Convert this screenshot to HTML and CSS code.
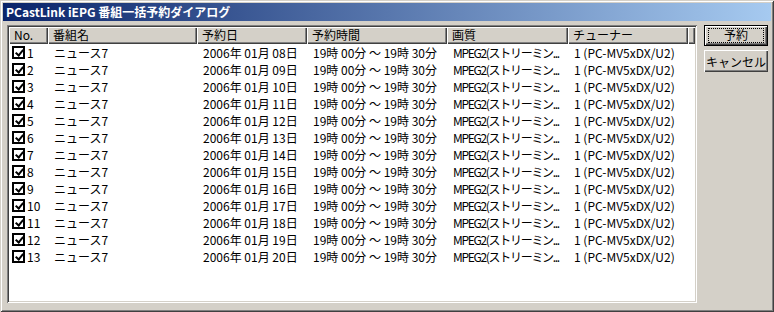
FILE: index.html
```html
<!DOCTYPE html>
<html lang="ja">
<head>
    <meta charset="UTF-8">
    <title>PCastLink iEPG 番組一括予約ダイアログ</title>
    <link rel="stylesheet" href="styles.css">
</head>
<body>
<div class="window">
    <div class="titlebar">PCastLink iEPG 番組一括予約ダイアログ</div>
    <div class="content">
        <div class="listview">
            <div class="header">
                <div class="hcell c-no">No.</div>
                <div class="hcell c-name">番組名</div>
                <div class="hcell c-date">予約日</div>
                <div class="hcell c-time">予約時間</div>
                <div class="hcell c-quality">画質</div>
                <div class="hcell c-tuner">チューナー</div>
                <div class="hcell c-rest"></div>
            </div>
            <div id="rows"></div>
        </div>
        <div class="buttons">
            <button class="btn default"><span class="focus">予約</span></button>
            <button class="btn">キャンセル</button>
        </div>
    </div>
</div>
<script>
    const rows = document.getElementById("rows");
    for (let i = 1; i <= 13; i++) {
        const day = String(7 + i).padStart(2, "0");
        const row = document.createElement("div");
        row.className = "row";
        row.innerHTML =
            '<div class="cell c-no"><span class="check"></span>' + i + '</div>' +
            '<div class="cell c-name">ニュース7</div>' +
            '<div class="cell c-date">2006年 01月 ' + day + '日</div>' +
            '<div class="cell c-time">19時 00分 ～ 19時 30分</div>' +
            '<div class="cell c-quality"><span class="squeeze">MPEG2(ストリーミン...</span></div>' +
            '<div class="cell c-tuner">1 (PC-MV5xDX/U2)</div>';
        rows.appendChild(row);
    }
</script>
</body>
</html>
```

FILE: styles.css
```css
body {
    margin: 0;
    font-family: "Noto Sans CJK JP", "DejaVu Sans", sans-serif;
    font-size: 12px;
    color: #000;
    background-color: #d4d0c8;
}
.window {
    width: 774px;
    height: 312px;
    box-sizing: border-box;
    padding: 3px;
    background-color: #d4d0c8;
    box-shadow: inset 1px 1px #d4d0c8, inset -1px -1px #404040,
                inset 2px 2px #ffffff, inset -2px -2px #808080;
}
.titlebar {
    height: 18px;
    line-height: 18px;
    padding-left: 3px;
    color: #fff;
    font-weight: bold;
    background: linear-gradient(to right, #0a246a, #a6caf0);
    white-space: nowrap;
}
.content {
    display: flex;
    padding: 4px 0 0 4px;
}
.listview {
    width: 690px;
    height: 278px;
    box-sizing: border-box;
    padding: 2px;
    background-color: #fff;
    box-shadow: inset 1px 1px #808080, inset -1px -1px #ffffff,
                inset 2px 2px #404040, inset -2px -2px #d4d0c8;
    overflow: hidden;
}
.header {
    display: flex;
    height: 17px;
}
.hcell {
    box-sizing: border-box;
    height: 17px;
    line-height: 16px;
    padding-left: 5px;
    background-color: #d4d0c8;
    box-shadow: inset 1px 1px #ffffff, inset -1px -1px #404040,
                inset -2px -2px #808080;
    white-space: nowrap;
    overflow: hidden;
}
.c-no { width: 39px; }
.c-name { width: 149px; }
.c-date { width: 110px; }
.c-time { width: 140px; }
.c-quality { width: 121px; }
.c-tuner { width: 120px; }
.c-rest { flex: 1; }
.row {
    display: flex;
    height: 17px;
    line-height: 17px;
}
.cell {
    box-sizing: border-box;
    padding-left: 6px;
    white-space: nowrap;
    overflow: hidden;
}
.squeeze {
    letter-spacing: -1.3px;
}
.row .c-no {
    display: flex;
    align-items: center;
    padding-left: 3px;
}
.check {
    width: 13px;
    height: 13px;
    box-sizing: border-box;
    border: 2px solid #000;
    margin-right: 2px;
    position: relative;
    flex: none;
}
.check::after {
    content: "";
    position: absolute;
    left: 3px;
    top: 0px;
    width: 3px;
    height: 6px;
    border: solid #000;
    border-width: 0 2px 2px 0;
    transform: rotate(40deg);
}
.buttons {
    display: flex;
    flex-direction: column;
    gap: 4px;
    margin-left: 7px;
}
.btn {
    width: 64px;
    height: 22px;
    padding: 0;
    font-family: inherit;
    font-size: 12px;
    background-color: #d4d0c8;
    border: none;
    box-shadow: inset 1px 1px #ffffff, inset -1px -1px #404040,
                inset -2px -2px #808080;
}
.btn.default {
    height: 21px;
    box-shadow: inset 0 0 0 1px #000, inset 2px 2px #ffffff,
                inset -2px -2px #404040, inset -3px -3px #808080;
}
.focus {
    display: block;
    margin: 0 4px;
    height: 13px;
    line-height: 12px;
    border: 1px dotted #000;
}
```
